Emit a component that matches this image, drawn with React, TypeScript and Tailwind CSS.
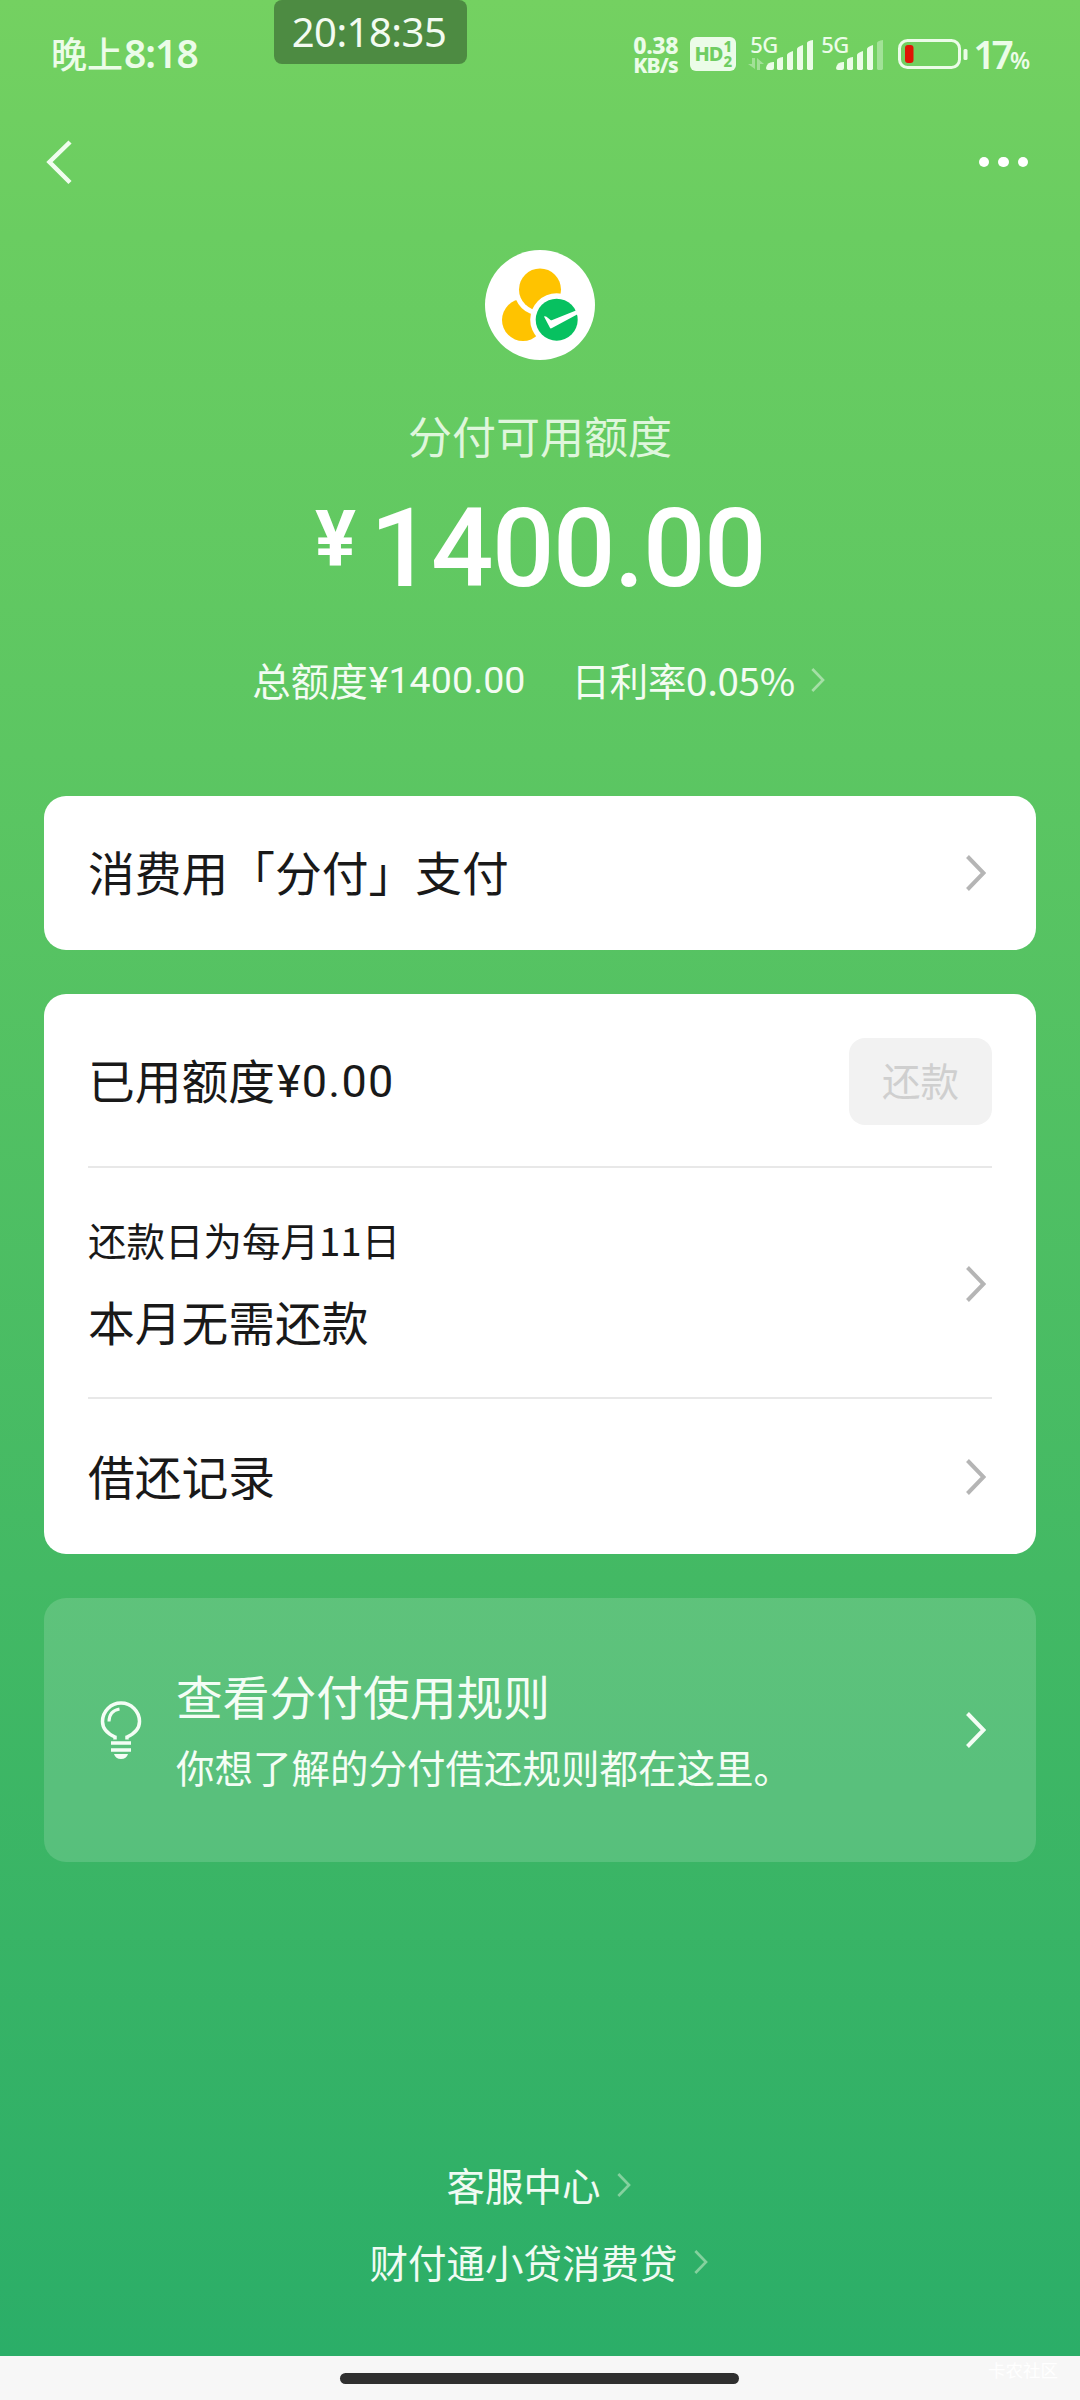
import clsx from "clsx";

function Chevron({ className }: { className?: string }) {
  return (
    <svg viewBox="0 0 20 36" fill="none" className={clsx("shrink-0", className)}>
      <path d="M1.5 1.5 17.5 18 1.5 34.5" stroke="currentColor" strokeWidth="4" />
    </svg>
  );
}

function SignalBars({ weak }: { weak?: boolean }) {
  return (
    <svg viewBox="0 0 49 31" fill="currentColor" className="h-[31px] w-[49px]">
      <path d="M0 28q1-6 7-6h1v6q0 2-2 2H2q-2 0-2-2z" />
      <path d="M11 20q0-2 6-3v12l-1 1h-4l-1-1z" />
      <path d="M21 15q0-2 6-4v18l-1 1h-4l-1-1z" />
      <path d="M31 9q0-2 6-4v24l-1 1h-4l-1-1z" />
      <path d="M41 3q0-2 6-3v29l-1 1h-4l-1-1z" opacity={weak ? 0.4 : 1} />
    </svg>
  );
}

function StatusBar() {
  return (
    <div className="relative flex h-[106px] items-start justify-between pl-[51px] pr-[50px] text-[#ebfce8]">
      <div className="mt-[28px] flex h-[50px] items-center whitespace-nowrap text-[36px] font-medium">
        <span className="pb-[3px]">晚上</span>
        <span className="ml-[1px] font-['Noto_Sans'] text-[39px] font-semibold tracking-[-1px]">8:18</span>
      </div>

      <div className="absolute left-[274px] top-0 flex h-16 w-[193px] items-center justify-center rounded-[8px] bg-[#4d8b42] pb-[1px] pr-[3px] font-['Noto_Sans'] text-[40px] tracking-[-0.5px] text-[#f3fbf1]">
        20:18:35
      </div>

      <div className="mt-[34px] flex h-10 items-start">
        <div className="w-[57px] whitespace-nowrap pt-[2px] font-['Noto_Sans'] font-extrabold">
          <div className="text-[23px] leading-[19px] tracking-[-0.4px]">0.38</div>
          <div className="pt-[1px] text-[21px] leading-[19px] tracking-[-0.8px]">KB/s</div>
        </div>
        <div className="mt-[3px] flex h-[34px] w-[46px] items-center justify-center gap-[1px] rounded-[6px] bg-[#ebfce8] font-['Noto_Sans'] font-extrabold text-[#70cd62]">
          <span className="text-[20px] leading-[20px] tracking-[-1px]">HD</span>
          <span className="flex flex-col text-[15px] leading-[15px]">
            <span>1</span>
            <span>2</span>
          </span>
        </div>
        <div className="relative ml-[12px] h-9 w-[67px]">
          <span className="absolute left-[2px] top-[2px] font-['Noto_Sans'] text-[22px] font-medium leading-[16px] tracking-[-0.5px]">
            5G
          </span>
          <svg viewBox="0 0 16 12" className="absolute left-0 top-[24px] h-3 w-4 opacity-40" fill="currentColor">
            <path d="M4 0h3v11L0 6h4zM9 12V0l7 6h-4v6z" />
          </svg>
          <div className="absolute left-[18px] top-[6px]">
            <SignalBars />
          </div>
        </div>
        <div className="relative ml-[5px] h-9 w-[67px]">
          <span className="absolute left-[1px] top-[2px] font-['Noto_Sans'] text-[22px] font-medium leading-[16px] tracking-[-0.5px]">
            5G
          </span>
          <div className="absolute left-[16px] top-[6px]">
            <SignalBars weak />
          </div>
        </div>
        <svg viewBox="0 0 70 31" className="ml-[11px] mt-[5px] h-[31px] w-[70px]" fill="none">
          <rect x="1.5" y="1.5" width="60" height="27" rx="8" stroke="currentColor" strokeWidth="3" />
          <rect x="7" y="6" width="8.5" height="18" rx="3" fill="#e01405" />
          <rect x="65.5" y="10" width="4" height="11" rx="1.5" fill="currentColor" />
        </svg>
        <div className="ml-[5px] flex items-baseline whitespace-nowrap font-['Noto_Sans'] font-semibold leading-[40px]">
          <span className="text-[39px] tracking-[-4px]">17</span>
          <span className="text-[23px]">%</span>
        </div>
      </div>
    </div>
  );
}

function NavBar() {
  return (
    <div className="flex h-[112px] items-center justify-between pl-[46px] pr-[52px] text-[#f0fdee]">
      <svg viewBox="0 0 26 48" className="h-12 w-[26px]" fill="none">
        <path d="M24 4 3.500 24 24 44.500" stroke="currentColor" strokeWidth="4.500" />
      </svg>
      <div className="flex gap-[9px] text-white">
        <span className="size-[10.500px] rounded-full bg-current" />
        <span className="size-[10.500px] rounded-full bg-current" />
        <span className="size-[10.500px] rounded-full bg-current" />
      </div>
    </div>
  );
}

function Logo() {
  return (
    <svg viewBox="0 0 110 110" className="size-[110px]">
      <circle cx="55" cy="55" r="55" fill="#fff" />
      <circle cx="38" cy="70" r="21" fill="#ffc300" />
      <circle cx="55" cy="39.5" r="26" fill="#fff" />
      <circle cx="55" cy="39.5" r="21" fill="#ffc300" />
      <circle cx="71.7" cy="69.7" r="26.5" fill="#fff" />
      <circle cx="71.7" cy="69.7" r="21" fill="#07c160" />
      <path d="M59 66.500q1-.8 2.500.2l4 3.300q.8.500 1.800 0L91 60.500 93 64 67 78q-1.600 1-2.200-.6z" fill="#fff" />
    </svg>
  );
}

function Balance() {
  return (
    <div className="flex flex-col items-center pt-8">
      <Logo />
      <p className="mt-[45px] text-[44px] leading-[60px] text-[#dff6dc]">分付可用额度</p>
      <div className="mt-[27px] flex h-[114px] items-start whitespace-nowrap font-['Roboto'] font-medium text-white">
        <span className="mr-[7px] mt-[-2px] inline-block w-[48px] origin-left scale-x-[0.98] text-[78px] font-bold leading-[100px]">
          ¥
        </span>
        <span className="text-[110px] leading-[114px] tracking-[-1.500px]">1400.00</span>
      </div>
      <div className="mt-[44px] flex h-[60px] items-center whitespace-nowrap pr-[3px] text-[38.500px] text-[#f3fcf2]">
        <span>总额度</span>
        <span className="pl-[1px] font-['Roboto'] text-[37.500px] tracking-[0.100px]">¥1400.00</span>
        <span className="ml-[46px] tracking-[-0.300px]">日利率0.05%</span>
        <Chevron className="ml-[16px] h-6 w-[14px] text-[#a5dfa6]" />
      </div>
    </div>
  );
}

function Rules() {
  return (
    <div className="mt-11 flex h-[264px] items-center rounded-[22px] bg-white/15 pl-[56px] pr-[50px] text-[#f4fdf5]">
      <svg viewBox="0 0 42 58" className="h-[58px] w-[42px] shrink-0" fill="none" stroke="currentColor">
        <path d="M15 38.500v-2.500Q2.500 30.500 2.500 20.500a18.500 18.500 0 0 1 37 0q0 10-12.500 15.500v2.500" strokeWidth="3.5" />
        <path d="M9 20.500q0-10.500 10.500-12.500" strokeWidth="3" />
        <path d="M11 42h20M11 49h20" strokeWidth="3.5" />
        <path d="M14 53h14q-1.500 5-7 5t-7-5z" fill="currentColor" stroke="none" />
      </svg>
      <div className="ml-[34px] flex-1 whitespace-nowrap pb-[2px]">
        <p className="text-[46.750px] leading-[70px]">查看分付使用规则</p>
        <p className="mt-[4px] text-[38.500px] leading-[64px]">你想了解的分付借还规则都在这里。</p>
      </div>
      <Chevron className="h-9 w-5" />
    </div>
  );
}

export default function App() {
  return (
    <div className="flex h-[2400px] w-[1080px] flex-col overflow-hidden font-['Noto_Sans_CJK_SC',sans-serif]">
      <div className="flex h-[2356px] flex-col bg-[linear-gradient(180deg,#74d161_0%,#6acd61_10%,#5cc662_32%,#43b964_67%,#2bae68_100%)]">
        <StatusBar />
        <NavBar />
        <Balance />

        <div className="mx-11 mt-[86px] text-[46.750px] text-[#191919]">
          <div className="flex h-[154px] items-center justify-between rounded-[22px] bg-white pl-11 pr-[50px]">
            <span className="pb-[3px]">消费用「分付」支付</span>
            <Chevron className="h-9 w-5 text-[#b5b5b5]" />
          </div>

          <div className="mt-11 h-[560px] rounded-[22px] bg-white px-11">
            <div className="flex h-[174px] items-center justify-between border-b-2 border-[#e8e8e8]">
              <span className="flex items-center pb-[1px]">
                已用额度
                <span className="pl-[2px] pt-[5px] font-['Roboto'] text-[45px] tracking-[1.200px]">¥0.00</span>
              </span>
              <button className="mt-[2px] h-[87px] w-[143px] rounded-[16px] bg-[#f2f2f2] pb-[2px] text-[38.500px] text-[#cfcfcf]">
                还款
              </button>
            </div>
            <div className="flex h-[231px] items-center justify-between border-b-2 border-[#e8e8e8] pr-[6px]">
              <div>
                <p className="text-[38.500px] leading-[60px]">还款日为每月11日</p>
                <p className="mt-[17px] leading-[70px]">本月无需还款</p>
              </div>
              <Chevron className="mt-[2px] h-9 w-5 text-[#b5b5b5]" />
            </div>
            <div className="flex h-[155px] items-center justify-between pr-[6px]">
              <span className="pb-[2px]">借还记录</span>
              <Chevron className="h-9 w-5 text-[#b5b5b5]" />
            </div>
          </div>

          <Rules />
        </div>

        <div className="mt-auto flex flex-col items-center gap-[13px] pb-[63px] pr-[3px] text-[38.500px] leading-[64px] text-[#f0fbf3]">
          <a className="flex items-center">
            客服中心
            <Chevron className="ml-[16px] mt-[2px] h-6 w-[14px] text-[#84d19e]" />
          </a>
          <a className="flex items-center">
            财付通小贷消费贷
            <Chevron className="ml-[16px] mt-[2px] h-6 w-[14px] text-[#84d19e]" />
          </a>
        </div>
      </div>

      <div className="relative flex h-11 justify-center bg-[#f7f7f7] pr-[1px] pt-[17px]">
        <div className="h-[11px] w-[399px] rounded-full bg-[#2f2f2f]" />
        <span className="absolute right-[22px] top-[4px] text-[17.500px] leading-[20px] text-white">卡农社区</span>
      </div>
    </div>
  );
}
